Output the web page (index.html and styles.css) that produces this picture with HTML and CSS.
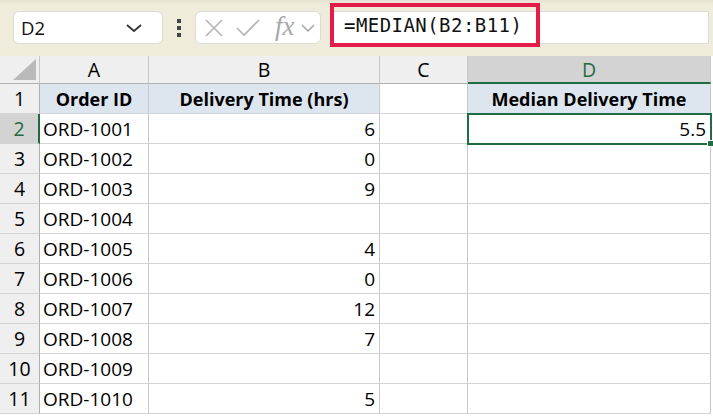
FILE: index.html
```html
<!DOCTYPE html>
<html>
<head>
<meta charset="utf-8">
<link rel="stylesheet" href="styles.css">
</head>
<body>
<div class="app">
  <div class="toolbar">
    <div class="namebox">
      <span class="ref">D2</span>
      <svg class="chev" width="18" height="12" viewBox="0 0 18 12"><path d="M2 3 L9 9 L16 3" fill="none" stroke="#333" stroke-width="1.8"/></svg>
    </div>
    <div class="dots"><i></i><i></i><i></i></div>
    <div class="fxbox">
      <svg width="20" height="20" viewBox="0 0 20 20"><path d="M2 2 L18 18 M18 2 L2 18" stroke="#b4b4b4" stroke-width="1.6" fill="none"/></svg>
      <svg width="24" height="20" viewBox="0 0 24 20"><path d="M1 10 L8 17 L23 2" stroke="#b4b4b4" stroke-width="1.6" fill="none"/></svg>
      <span class="fx">fx</span>
      <svg width="14" height="10" viewBox="0 0 14 10"><path d="M1 2 L7 8 L13 2" fill="none" stroke="#a0a0a0" stroke-width="1.4"/></svg>
    </div>
    <div class="formula">
      <div class="highlight"><span class="ftext">=MEDIAN(B2:B11)</span></div>
    </div>
  </div>
  <div class="sheet">
    <div class="c corner"><svg width="30" height="24" viewBox="0 0 30 24"><path d="M29 2 L29 23 L6 23 Z" fill="#b9b9b9"/></svg></div>
    <div class="c colh">A</div>
    <div class="c colh">B</div>
    <div class="c colh">C</div>
    <div class="c colh sel">D</div>

    <div class="c rowh">1</div>
    <div class="c hdr">Order ID</div>
    <div class="c hdr">Delivery Time (hrs)</div>
    <div class="c"></div>
    <div class="c hdr">Median Delivery Time</div>

    <div class="c rowh rsel">2</div>
    <div class="c">ORD-1001</div>
    <div class="c num">6</div>
    <div class="c"></div>
    <div class="c num active">5.5<span class="handle"></span></div>

    <div class="c rowh">3</div>
    <div class="c">ORD-1002</div>
    <div class="c num">0</div>
    <div class="c"></div>
    <div class="c"></div>

    <div class="c rowh">4</div>
    <div class="c">ORD-1003</div>
    <div class="c num">9</div>
    <div class="c"></div>
    <div class="c"></div>

    <div class="c rowh">5</div>
    <div class="c">ORD-1004</div>
    <div class="c num"></div>
    <div class="c"></div>
    <div class="c"></div>

    <div class="c rowh">6</div>
    <div class="c">ORD-1005</div>
    <div class="c num">4</div>
    <div class="c"></div>
    <div class="c"></div>

    <div class="c rowh">7</div>
    <div class="c">ORD-1006</div>
    <div class="c num">0</div>
    <div class="c"></div>
    <div class="c"></div>

    <div class="c rowh">8</div>
    <div class="c">ORD-1007</div>
    <div class="c num">12</div>
    <div class="c"></div>
    <div class="c"></div>

    <div class="c rowh">9</div>
    <div class="c">ORD-1008</div>
    <div class="c num">7</div>
    <div class="c"></div>
    <div class="c"></div>

    <div class="c rowh">10</div>
    <div class="c">ORD-1009</div>
    <div class="c num"></div>
    <div class="c"></div>
    <div class="c"></div>

    <div class="c rowh">11</div>
    <div class="c">ORD-1010</div>
    <div class="c num">5</div>
    <div class="c"></div>
    <div class="c"></div>
  </div>
</div>
</body>
</html>
```
FILE: styles.css
```css
* { box-sizing: border-box; }
html, body { margin: 0; padding: 0; background: #fff; overflow: hidden; }
.app { width: 713px; height: 416px; font-family: "Open Sans", sans-serif; }

.toolbar {
  height: 56px;
  background: linear-gradient(#e4e1d1 0, #efecdc 4px, #efecdc 100%);
  display: flex;
  align-items: flex-start;
  padding-top: 11px;
  padding-left: 13px;
}
.namebox {
  width: 150px; height: 33px;
  background: #fff;
  border: 1px solid #dcdcd6;
  border-radius: 6px;
  display: flex; align-items: center; justify-content: space-between;
  padding: 0 19px 0 7px;
}
.ref { font-size: 18.5px; color: #111; }
.dots {
  width: 32px; height: 33px;
  display: flex; flex-direction: column; align-items: center; justify-content: center; gap: 3px;
}
.dots i { display: block; width: 4px; height: 4px; background: #444; }
.fxbox {
  width: 126px; height: 33px;
  background: #fff;
  border: 1px solid #dcdcd6;
  border-radius: 6px;
  display: flex; align-items: center;
  padding-left: 8px;
  gap: 10px;
}
.fxbox svg:nth-child(2) { margin-left: 2px; }
.fx {
  font-family: "Liberation Serif", serif; font-style: italic;
  font-size: 27px; color: #a8a8a8; margin-left: 5px; letter-spacing: 0px;
  line-height: 1; margin-top: -3px;
}
.fxbox svg:last-child { margin-left: -4px; }
.formula {
  margin-left: 9px;
  width: 379px; height: 33px;
  background: #fff;
  border: 1px solid #dcdcd6;
  border-radius: 4px 0 0 4px;
  position: relative;
}
.highlight {
  position: absolute;
  left: -1px; top: -9px;
  width: 210px; height: 44px;
  border: 4px solid #e31c49;
  display: flex; align-items: center;
  padding-left: 10px;
}
.ftext { font-family: "DejaVu Sans Mono", monospace; font-size: 19px; color: #111; letter-spacing: 0.45px; }

.sheet {
  display: grid;
  grid-template-columns: 40px 109px 231px 88px 243px;
  grid-template-rows: 28px repeat(11, 30px);
  font-size: 19px;
  color: #000;
}
.c {
  border-right: 1px solid #c8c8c8;
  border-bottom: 1px solid #d4d4d4;
  display: flex; align-items: center;
  padding: 0 3px;
  white-space: nowrap;
  position: relative;
}
.corner { background: #efefef; border-right-color: #c8c8c8; border-bottom-color: #b0b0b0; justify-content: flex-end; align-items: flex-end; padding: 0 2px 2px 0; }
.corner svg { display: block; }
.colh { background: #efefef; justify-content: center; font-size: 19.5px; border-bottom-color: #b0b0b0; border-right-color: #c8c8c8; }
.colh.sel { background: #d3d3d3; color: #1e6c41; border-bottom: 2px solid #1e6c41; }
.rowh { background: #efefef; justify-content: center; padding: 0; font-size: 19.5px; border-right-color: #b0b0b0; border-bottom-color: #d4d4d4; }
.rowh.rsel { background: #d3d3d3; color: #1e6c41; border-right: 2px solid #1e6c41; }
.hdr { background: #dde6ef; font-weight: 700; justify-content: center; font-size: 18px; }
.num { justify-content: flex-end; padding-right: 4px; }
.active { outline: 2px solid #1e6c41; outline-offset: -1px; z-index: 1; }
.handle { position: absolute; right: -4px; bottom: -4px; width: 7px; height: 7px; background: #1e6c41; border: 1px solid #fff; }
```
